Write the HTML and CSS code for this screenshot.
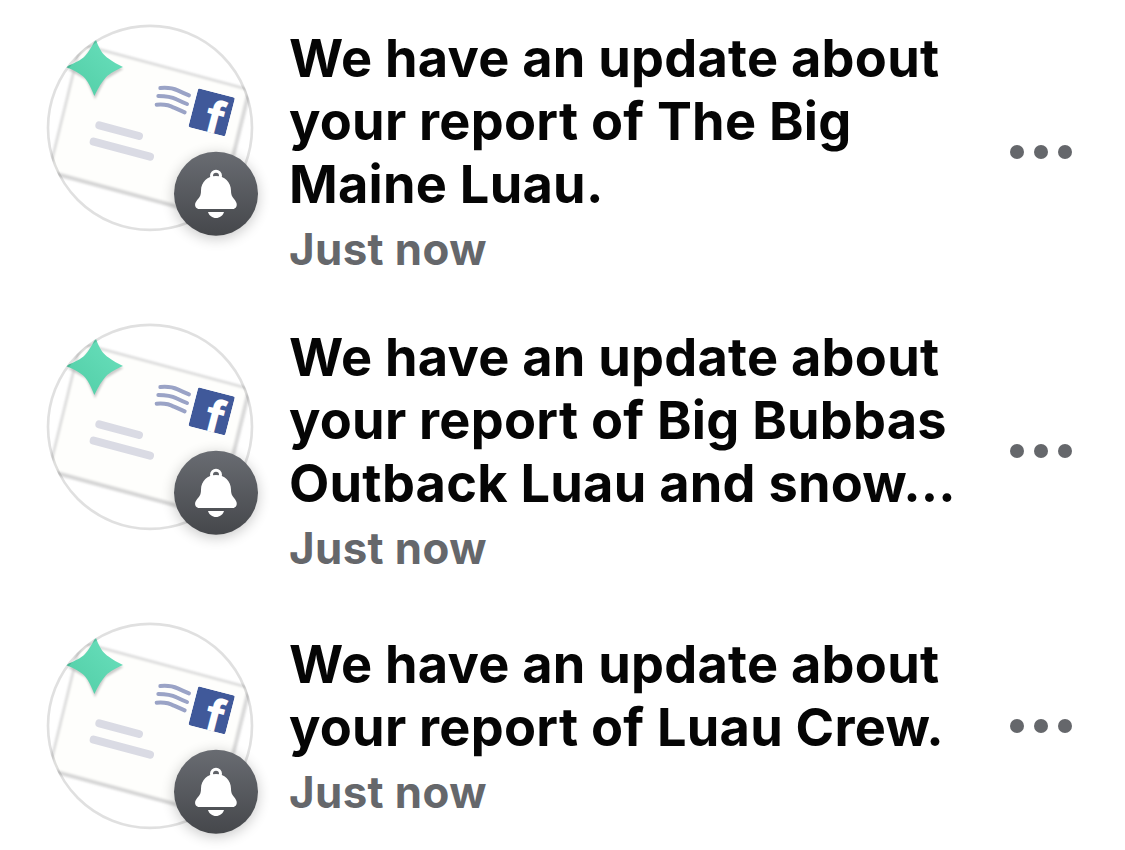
FILE: index.html
```html
<!DOCTYPE html>
<html lang="en">

<head>
    <meta charset="UTF-8">
    <meta name="viewport" content="width=device-width, initial-scale=1.0">
    <title>Notifications</title>
    <link rel="stylesheet" href="styles.css">
</head>

<body>
    <!-- shared artwork -->
    <svg class="sprite" width="0" height="0" aria-hidden="true">
        <defs>
            <linearGradient id="badge-fill" x1="0" y1="0" x2="0" y2="1">
                <stop offset="0" stop-color="#696c72" />
                <stop offset="1" stop-color="#45474b" />
            </linearGradient>
            <linearGradient id="star-fill" x1="1" y1="0" x2="0" y2="1">
                <stop offset="0" stop-color="#6ae0bd" />
                <stop offset="1" stop-color="#50cda5" />
            </linearGradient>
            <clipPath id="avatar-clip">
                <circle cx="330" cy="338.500" r="309" />
            </clipPath>
            <clipPath id="stamp-clip">
                <rect x="-57" y="-60" width="114" height="120" rx="6" />
            </clipPath>
            <filter id="soft" x="-20%" y="-20%" width="140%" height="140%">
                <feGaussianBlur stdDeviation="2.500" />
            </filter>
            <filter id="shadow" x="-40%" y="-40%" width="180%" height="180%">
                <feGaussianBlur stdDeviation="20" />
            </filter>
        </defs>

        <symbol id="envelope" viewBox="0 0 690 720">
            <g clip-path="url(#avatar-clip)">
                <g filter="url(#soft)">
                    <path d="M140 93 L611 220 Q628 225 624 242 L534 608 L27 471 L106 150 Q120 88 140 93Z" fill="#fefefc" stroke="#dadada" stroke-width="8" />
                    <path d="M27 471 L534 608" stroke="#d6d6d6" stroke-width="12" />
                    <path d="M624 242 L580 420" stroke="#d9d9d9" stroke-width="12" />
                    <path d="M166 80 L192 136 L250 162 L196 194 L165 253 L138 194 L84 164 L130 135Z" fill="#aaa" opacity=".6" />
                </g>
                <path d="M167 72 C174 93 184 113 196 123 C208 134 230 147 249 156 C230 164 209 175 198 187 C186 200 174 220 163 243 C154 220 146 203 136 191 C125 178 104 166 76 156 C104 144 124 135 135 123 C146 111 156 95 167 72Z" fill="url(#star-fill)" />
                <g fill="none" stroke="#dadbe4" stroke-width="24" stroke-linecap="round">
                    <path d="M178 331 L297 363" />
                    <path d="M161 380 L330 425" />
                </g>
                <g fill="none" stroke="#9aa3c6" stroke-width="12" stroke-linecap="round">
                    <path d="M361 219 C385 217 398 219 413 226 Q430 234 447 241" />
                    <path d="M355 243 C379 243 394 245 409 253 Q425 261 441 267" />
                    <path d="M350 269 C374 267 388 270 402 278 Q420 286 434 292" />
                </g>
                <g transform="translate(515 292) rotate(14.500)">
                    <g clip-path="url(#stamp-clip)">
                        <rect x="-57" y="-60" width="114" height="120" fill="#40599a" />
                        <text class="stamp-letter" x="-14" y="66">f</text>
                    </g>
                </g>
            </g>
            <circle cx="330" cy="338.500" r="306" fill="none" stroke="#000" stroke-opacity=".12" stroke-width="8" />
        </symbol>

        <symbol id="bell" viewBox="0 0 690 720">
            <circle cx="528" cy="544" r="126" fill="#000" opacity=".22" filter="url(#shadow)" />
            <circle cx="528" cy="536" r="126" fill="url(#badge-fill)" />
            <circle cx="528" cy="482" r="13.500" fill="none" stroke="#fff" stroke-width="9" />
            <path d="M528 483 C553 483 573 501 573 527 C573 543 579 547 586 557 C594 568 591 582 576 582 L480 582 C465 582 461 568 470 557 C478 547 483 543 483 527 C483 501 503 483 528 483Z" fill="#fff" />
            <path d="M504 591 H552 C549 602 539 609 528 609 C517 609 507 602 504 591Z" fill="#fff" />
        </symbol>
    </svg>

    <main class="notifications">
        <article class="notification">
            <div class="avatar">
                <svg class="avatar-art"><use href="#envelope" /><use href="#bell" /></svg>
            </div>
            <div class="content">
                <h2 class="message">We have an update about<br>your report of The Big<br>Maine Luau.</h2>
                <p class="time">Just now</p>
            </div>
            <div class="more"><i></i><i></i><i></i></div>
        </article>

        <article class="notification">
            <div class="avatar">
                <svg class="avatar-art"><use href="#envelope" /><use href="#bell" /></svg>
            </div>
            <div class="content">
                <h2 class="message">We have an update about<br>your report of Big Bubbas<br>Outback Luau and snow…</h2>
                <p class="time">Just now</p>
            </div>
            <div class="more"><i></i><i></i><i></i></div>
        </article>

        <article class="notification">
            <div class="avatar">
                <svg class="avatar-art"><use href="#envelope" /><use href="#bell" /></svg>
            </div>
            <div class="content">
                <h2 class="message">We have an update about<br>your report of Luau Crew.</h2>
                <p class="time">Just now</p>
            </div>
            <div class="more"><i></i><i></i><i></i></div>
        </article>
    </main>
</body>

</html>
```
FILE: styles.css
```css
:root {
    --text-color: #050505;
    --muted-color: #65676b;
}

* {
    box-sizing: border-box;
}

body {
    margin: 0;
    min-height: 100vh;
    background: #fff;
    color: var(--text-color);
    font-family: Inter, "Liberation Sans", sans-serif;
}

.sprite {
    position: absolute;
}

.notifications {
    display: flex;
    flex-direction: column;
    gap: 45px;
    padding: 25px 53px 0 47px;
}

.notification {
    display: flex;
    align-items: center;
}

.avatar {
    width: 206px;
    height: 206px;
    flex: none;
    align-self: flex-start;
}

/* the drawing is larger than the circle so the badge and its shadow fit */
.avatar-art {
    display: block;
    width: 230px;
    height: 240px;
    margin: -10px 0 0 -7px;
    overflow: visible;
}

.stamp-letter {
    font-family: Inter, sans-serif;
    font-size: 142px;
    font-weight: 700;
    fill: #fff;
}

.content {
    flex: 1;
    padding: 2px 0 3px;
    margin-left: 36px;
    white-space: nowrap;
}

.message {
    margin: 0;
    font-size: 52.3px;
    font-weight: 700;
    letter-spacing: 0.25px;
    line-height: 63px;
}

.time {
    margin: 7px 0 0;
    color: var(--muted-color);
    font-size: 43.8px;
    font-weight: 700;
    letter-spacing: 0.4px;
    line-height: 53px;
}

.more {
    display: flex;
    gap: 10px;
}

.more i {
    width: 14px;
    height: 14px;
    border-radius: 50%;
    background: var(--muted-color);
}
```
